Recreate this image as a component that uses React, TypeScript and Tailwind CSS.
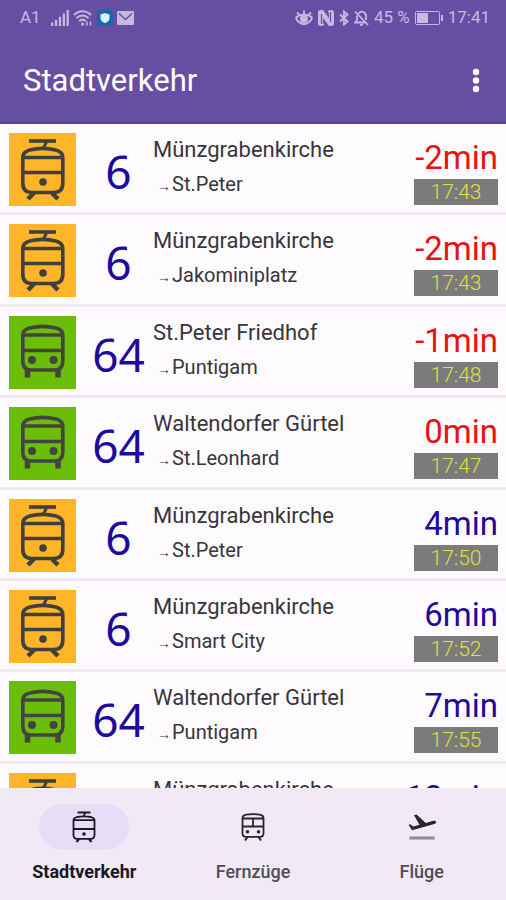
import { clsx } from "clsx";
import type { ReactNode } from "react";

type Vehicle = "tram" | "bus";

type Departure = {
  vehicle: Vehicle;
  line: string;
  stop: string;
  direction: string;
  minutes: number;
  time: string;
};

const departures: Departure[] = [
  { vehicle: "tram", line: "6", stop: "Münzgrabenkirche", direction: "St.Peter", minutes: -2, time: "17:43" },
  { vehicle: "tram", line: "6", stop: "Münzgrabenkirche", direction: "Jakominiplatz", minutes: -2, time: "17:43" },
  { vehicle: "bus", line: "64", stop: "St.Peter Friedhof", direction: "Puntigam", minutes: -1, time: "17:48" },
  { vehicle: "bus", line: "64", stop: "Waltendorfer Gürtel", direction: "St.Leonhard", minutes: 0, time: "17:47" },
  { vehicle: "tram", line: "6", stop: "Münzgrabenkirche", direction: "St.Peter", minutes: 4, time: "17:50" },
  { vehicle: "tram", line: "6", stop: "Münzgrabenkirche", direction: "Smart City", minutes: 6, time: "17:52" },
  { vehicle: "bus", line: "64", stop: "Waltendorfer Gürtel", direction: "Puntigam", minutes: 7, time: "17:55" },
  { vehicle: "tram", line: "6", stop: "Münzgrabenkirche", direction: "St.Peter", minutes: 12, time: "18:00" },
];

const TramIcon = () => (
  <svg viewBox="0 0 67 73" className="h-full w-full" fill="none" stroke="#40403f" strokeWidth="3.6">
    <path d="M20 8h27" />
    <path d="M37.500 9L34 16" strokeWidth="3" />
    <path d="M13.800 25c0-5 3-7 7-8 8-2 18-2 26 0 4 1 7 3 7 8v25c0 6-3 9.500-9 9.500h-22c-6 0-9-3.500-9-9.500z" />
    <path d="M14 24.500h40M14 39.500h40" />
    <path d="M25 60l-6 6M43 60l6 6" strokeWidth="4.500" />
    <circle cx="34" cy="49" r="3.800" fill="#40403f" stroke="none" />
  </svg>
);

const BusIcon = () => (
  <svg viewBox="0 0 67 73" className="h-full w-full" fill="none" stroke="#414440" strokeWidth="3.6">
    <path d="M13.800 19c0-4 3-6 7-7 8-2 18-2 26 0 4 1 7 3 7 7v26c0 6-3 9-8 9h-24c-5 0-8-3-8-9z" />
    <path d="M14 19h40M14 34.500h40" />
    <path d="M18.500 53v8.500M49 53v8.500" strokeWidth="5.5" />
    <circle cx="23" cy="44" r="4" fill="#414440" stroke="none" />
    <circle cx="44.500" cy="44" r="4" fill="#414440" stroke="none" />
  </svg>
);

const StatusIcons = {
  Signal: () => (
    <svg viewBox="0 0 18 16" className="h-4 w-[18px]" fill="currentColor">
      <path d="M0 12.500h2.300V16H0zM3.900 10h2.300v6H3.900zM7.800 6.800h2.300V16H7.800zM11.700 3.500H14V16h-2.300zM15.500 0h2.300v16h-2.300z" />
    </svg>
  ),
  Wifi: () => (
    <svg viewBox="0 0 20 16" className="h-4 w-5" fill="none" stroke="currentColor" strokeWidth="2">
      <path d="M1 5c5-5 12-5 17 0M3.500 8.300c3.500-3.600 8.500-3.600 12 0M6.200 11.300c2-2 4.600-2 6.600 0" />
      <circle cx="9.500" cy="14" r="1.600" fill="currentColor" stroke="none" />
      <path d="M14 11.500v4M17.500 15.500v-4" strokeWidth="1.500" />
    </svg>
  ),
  Shield: () => (
    <svg viewBox="0 0 16 16" className="size-4">
      <rect width="16" height="16" rx="4" fill="#1667ae" />
      <path d="M8 3l4.500 1.500v3.800c0 2.300-2 3.900-4.500 5-2.500-1.100-4.500-2.700-4.500-5V4.500z" fill="#d9f4fa" />
    </svg>
  ),
  Mail: () => (
    <svg viewBox="0 0 17 14" className="h-3.5 w-[17px]">
      <rect width="17" height="14" rx="1" fill="#c6b8e3" />
      <path d="M2 2.500l6.500 6 6.500-6" fill="none" stroke="#664fa3" strokeWidth="1.500" />
    </svg>
  ),
  Eye: () => (
    <svg viewBox="0 0 18 16" className="h-4 w-[18px]" fill="none" stroke="currentColor" strokeWidth="1.900">
      <path d="M1.500 7c-1 2 .5 3.500 2 4.800 3.500 3 7.500 3 11 0 1.500-1.300 3-2.800 2-4.800-3.500-3-11.500-3-15 0z" />
      <circle cx="9" cy="9" r="3" fill="currentColor" />
      <path d="M9 4.500V.5M4.500 5L2 2.500M13.500 5L16 2.500" />
    </svg>
  ),
  Nfc: () => (
    <svg viewBox="0 0 16 16" className="size-4" fill="currentColor">
      <path d="M2.500 0H5l6 8V3.500L9.500.8 13.500 0C15 0 16 1 16 2.500v11c0 1.500-1 2.500-2.500 2.500H11L5 8v4.500l1.500 2.700-4 .8C1 16 0 15 0 13.500v-11C0 1 1 0 2.500 0z" />
      <path d="M3.500 14V4M12.500 2v10" stroke="#664fa3" strokeWidth="1.200" />
    </svg>
  ),
  Bluetooth: () => (
    <svg viewBox="0 0 10 16" className="h-4 w-2.5" fill="none" stroke="currentColor" strokeWidth="1.900">
      <path d="M1 4.500l7.500 7L5 14.500v-13l3.500 3-7.500 7" />
    </svg>
  ),
  BellOff: () => (
    <svg viewBox="0 0 15 16" className="h-4 w-[15px]" fill="none" stroke="currentColor" strokeWidth="1.800">
      <path d="M1 1.500l13 13.500M4.500 3.500C8-.5 12 2.500 12 6.500V10M3 5.500v4.500L1.200 12.500h9.500M6 14.800h3" />
    </svg>
  ),
  Battery: () => (
    <svg viewBox="0 0 28 14" className="h-3.5 w-7" fill="none" stroke="currentColor">
      <rect x=".5" y=".5" width="24" height="13" rx="1" />
      <path d="M2 2h11v10H2z" fill="currentColor" stroke="none" />
      <path d="M27 4v6" strokeWidth="2" />
    </svg>
  ),
};

const NavTram = () => (
  <svg viewBox="0 0 24 32" className="h-8 w-6" fill="none" stroke="#1d1725" strokeWidth="1.800">
    <path d="M5.500 1.500h13M13 2l-1.500 4" />
    <path d="M1.500 9.500C1.500 7 3 6.500 5 6c5-.8 9-.8 14 0 2 .5 3.500 1 3.500 3.500V24c0 2.500-1.200 3.800-3.800 3.800H5.300c-2.600 0-3.800-1.300-3.800-3.800z" />
    <path d="M2 9.200h20M1.500 18h21" />
    <path d="M7 28l-2.500 3M17 28l2.500 3" strokeWidth="2.200" />
    <circle cx="12" cy="23" r="1.800" fill="#1d1725" stroke="none" />
  </svg>
);

const NavTrain = () => (
  <svg viewBox="0 0 24 28" className="h-7 w-6" fill="none" stroke="#29242f" strokeWidth="1.800">
    <path d="M1.500 5C1.500 3 3 2.200 5 1.700c5-.9 9-.9 14 0 2 .5 3.500 1.300 3.500 3.300v15.300c0 2.300-1.300 3.500-3.500 3.500H5c-2.200 0-3.500-1.200-3.500-3.500z" />
    <path d="M2 5.500h20M1.500 13.500h21M12 5.500v8" />
    <path d="M6.500 24L4 27.500M17.500 24l2.500 3.500" strokeWidth="2" />
    <circle cx="6.500" cy="18.800" r="1.800" fill="#29242f" stroke="none" />
    <circle cx="17.500" cy="18.800" r="1.800" fill="#29242f" stroke="none" />
  </svg>
);

const NavPlane = () => (
  <svg viewBox="0 0 30 26" className="h-[26px] w-[30px]">
    <path d="M2.500 24h25" stroke="#8f8a98" strokeWidth="3" />
    <path
      d="M29 7.500c.4 1.300-.2 2.100-1.600 2.500L5 16.200 1.500 10.700l1.800-.5 3 2.200 6.200-1.700L7 1.300 9.500.6l9.300 8.300 6.700-1.800c1.600-.5 3-.7 3.500.4z"
      fill="#29242f"
    />
  </svg>
);

const navItems: { label: string; icon: ReactNode; active?: boolean }[] = [
  { label: "Stadtverkehr", icon: <NavTram />, active: true },
  { label: "Fernzüge", icon: <NavTrain /> },
  { label: "Flüge", icon: <NavPlane /> },
];

const DepartureRow = ({ vehicle, line, stop, direction, minutes, time }: Departure) => (
  <li className="flex items-start border-b-3 border-[#efebf0] px-2 pt-[9px]">
    <div className={clsx("ml-px h-[73px] w-[67px] shrink-0", vehicle === "tram" ? "bg-[#ffb527]" : "bg-[#6cbd08]")}>
      {vehicle === "tram" ? <TramIcon /> : <BusIcon />}
    </div>
    <div className="w-[77px] shrink-0 pl-2 text-center font-['Noto_Sans'] text-[46px] leading-[76px] text-[#1d0b9c]">
      {line}
    </div>
    <div className="min-w-0 flex-1 text-[#38353a]">
      <p className="truncate text-[22px] leading-[34px]">{stop}</p>
      <p className="flex items-center pl-1 text-xl leading-[34px]">
        <span className="w-[15px] pt-1 text-sm">→</span>
        {direction}
      </p>
    </div>
    <div className="flex shrink-0 flex-col items-end">
      <span className={clsx("pt-1 text-[33px] leading-[42px]", minutes > 0 ? "text-[#1d0b9c]" : "text-[#e8120f]")}>
        {minutes}min
      </span>
      <time className="w-[84px] bg-[#7b7b7b] text-center text-[21px] leading-[26px] font-light text-[#dde33b]">
        {time}
      </time>
    </div>
  </li>
);

export default function App() {
  return (
    <div className="flex h-screen flex-col overflow-hidden bg-[#fefbff] font-[Roboto,sans-serif]">
      <header className="shrink-0 border-b-2 border-[#583f98] bg-[#664fa3]">
        <div className="flex h-9 items-center justify-between pr-4 pl-5 text-[#c6b8e3]">
          <div className="flex items-center gap-1">
            <span className="pr-1.5 text-[17px]">A1</span>
            <StatusIcons.Signal />
            <StatusIcons.Wifi />
            <StatusIcons.Shield />
            <StatusIcons.Mail />
          </div>
          <div className="flex items-center gap-[5px] text-[17px]">
            <StatusIcons.Eye />
            <StatusIcons.Nfc />
            <StatusIcons.Bluetooth />
            <StatusIcons.BellOff />
            <span>45 %</span>
            <StatusIcons.Battery />
            <span>17:41</span>
          </div>
        </div>
        <div className="flex h-[86px] items-center justify-between pt-1 pr-5 pl-[23px] text-white">
          <h1 className="text-[31px]">Stadtverkehr</h1>
          <button type="button" aria-label="Menü" className="flex size-5 flex-col items-center justify-center">
            <svg viewBox="0 0 8 26" className="h-[26px] w-2 shrink-0" fill="currentColor">
              <circle cx="4" cy="4" r="3.200" />
              <circle cx="4" cy="12.500" r="3.200" />
              <circle cx="4" cy="21" r="3.200" />
            </svg>
          </button>
        </div>
      </header>

      <main className="min-h-0 flex-1 overflow-hidden">
        <ul className="grid h-[731px] auto-rows-fr">
          {departures.map((departure, i) => (
            <DepartureRow key={i} {...departure} />
          ))}
        </ul>
      </main>

      <nav className="grid h-28 shrink-0 grid-cols-3 bg-[#f1eaf6]">
        {navItems.map(({ label, icon, active }) => (
          <button
            key={label}
            type="button"
            className={clsx(
              "flex flex-col items-center gap-2 pt-4 text-lg",
              active ? "font-bold text-[#1d1725]" : "font-medium text-[#514b5a]",
            )}
          >
            <span className={clsx("flex h-[46px] w-[90px] items-center justify-center rounded-full", active && "bg-[#e8ddf7]")}>
              {icon}
            </span>
            {label}
          </button>
        ))}
      </nav>
    </div>
  );
}
